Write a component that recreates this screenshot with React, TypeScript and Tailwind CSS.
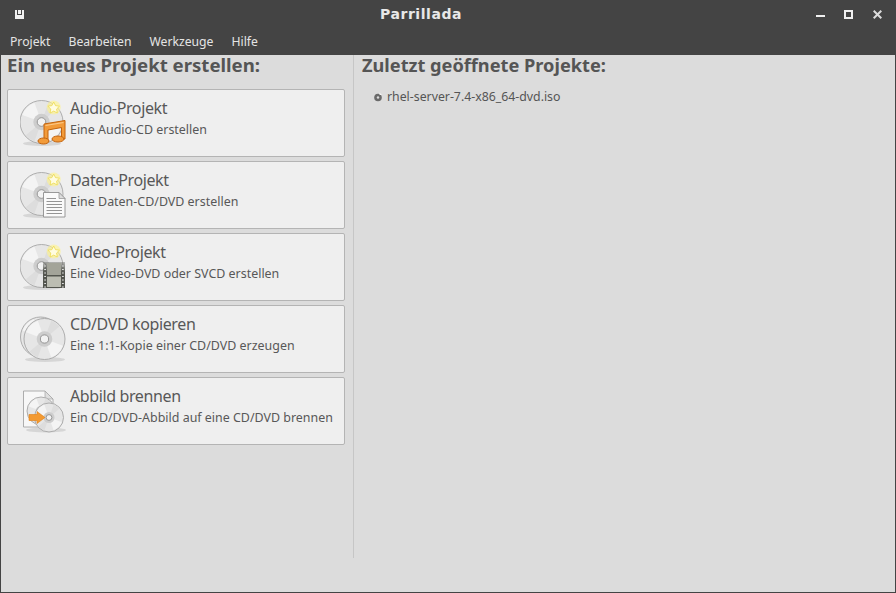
import React from "react";

const font = { fontFamily: '"Noto Sans", sans-serif' };

// Silver disc with soft reflections, drawn in a 48x48 box
function Disc({ cx = 21.5, cy = 23, r = 21.5 }: { cx?: number; cy?: number; r?: number }) {
  const p = (deg: number, rad: number) => {
    const a = (deg * Math.PI) / 180;
    return `${cx + Math.cos(a) * rad} ${cy + Math.sin(a) * rad}`;
  };
  const wedge = (a: number, b: number) =>
    `M${p(a, r * 0.3)} L${p(a, r - 1)} A${r - 1} ${r - 1} 0 0 1 ${p(b, r - 1)} L${p(b, r * 0.3)} Z`;
  return (
    <g>
      <circle cx={cx} cy={cy} r={r} fill="#e6e6e6" stroke="#a6a6a6" strokeWidth="0.9" />
      <path d={wedge(200, 250)} fill="#f4f4f4" />
      <path d={wedge(20, 70)} fill="#f4f4f4" />
      <path d={wedge(290, 320)} fill="#dddddd" />
      <path d={wedge(110, 140)} fill="#dddddd" />
      <circle cx={cx} cy={cy} r={r * 0.38} fill="#cdcdcd" />
      <circle cx={cx} cy={cy} r={r * 0.2} fill="#f2f2f2" stroke="#8e8e8e" strokeWidth="0.9" />
    </g>
  );
}

function Shadow({ cx = 22, cy = 44.5, rx = 19 }: { cx?: number; cy?: number; rx?: number }) {
  return <ellipse cx={cx} cy={cy} rx={rx} ry="2.6" fill="#000" opacity="0.1" />;
}

function Star() {
  return (
    <g>
      <circle cx="33.7" cy="8.5" r="7" fill="#fff38c" opacity="0.6" />
      <path
        d="M33.7 3l1.8 3.6 4 .6-2.9 2.8.7 4-3.6-1.9-3.6 1.9.7-4-2.9-2.8 4-.6z"
        fill="#fffce0"
        stroke="#efdc50"
        strokeWidth="0.8"
      />
    </g>
  );
}

function AudioIcon() {
  return (
    <svg width="48" height="48" viewBox="0 0 48 48">
      <Shadow />
      <Disc />
      <Star />
      <path
        d="M24 25 L45 21.5 V40 H41.5 V28.5 L28 31 V43 H24 Z"
        fill="#f29b3a"
        stroke="#c4630c"
        strokeWidth="1"
      />
      <path d="M25.5 26.5 L43.5 23.5" stroke="#fcc98a" strokeWidth="1.2" />
      <ellipse cx="23.5" cy="42" rx="5.5" ry="3" fill="#f29b3a" stroke="#c4630c" strokeWidth="1" />
      <ellipse cx="38" cy="40" rx="6" ry="3" fill="#f29b3a" stroke="#c4630c" strokeWidth="1" />
    </svg>
  );
}

function DataIcon() {
  return (
    <svg width="48" height="48" viewBox="0 0 48 48">
      <Shadow />
      <Disc />
      <Star />
      <path d="M23.5 21.5 H39 L45 27.5 V46 H23.5 Z" fill="#fafafa" stroke="#8f8f8f" strokeWidth="0.9" />
      <path d="M39 21.5 V27.5 H45 Z" fill="#dcdcdc" stroke="#8f8f8f" strokeWidth="0.7" />
      <path
        d="M26.5 27.5 H36 M26.5 30.5 H42 M26.5 33.5 H42 M26.5 36.5 H42 M26.5 39.5 H42 M26.5 42.5 H42"
        stroke="#7b7b7b"
        strokeWidth="0.8"
      />
    </svg>
  );
}

function VideoIcon() {
  return (
    <svg width="48" height="48" viewBox="0 0 48 48">
      <defs>
        <linearGradient id="film" x1="0" y1="0" x2="0" y2="1">
          <stop offset="0" stopColor="#54564f" stopOpacity="0.35" />
          <stop offset="0.4" stopColor="#54564f" />
        </linearGradient>
      </defs>
      <Shadow />
      <Disc />
      <Star />
      <rect x="23" y="19" width="22" height="26" fill="url(#film)" />
      <rect x="27" y="20" width="14" height="12" fill="#a3a499" />
      <rect x="27" y="33.5" width="14" height="10.5" fill="#bcbdb2" />
      <path
        d="M24.2 23h1.8M24.2 26.5h1.8M24.2 30h1.8M24.2 33.5h1.8M24.2 37h1.8M24.2 40.5h1.8M24.2 44h1.8M42 23h1.8M42 26.5h1.8M42 30h1.8M42 33.5h1.8M42 37h1.8M42 40.5h1.8M42 44h1.8"
        stroke="#dedede"
        strokeWidth="1.2"
      />
    </svg>
  );
}

function CopyIcon() {
  return (
    <svg width="48" height="48" viewBox="0 0 48 48">
      <Shadow cx={25} cy={44.5} rx={20} />
      <Disc cx={20.5} cy={22} r={20} />
      <Disc cx={24.5} cy={24} r={20.5} />
    </svg>
  );
}

function ImageIcon() {
  return (
    <svg width="48" height="48" viewBox="0 0 48 48">
      <Shadow cx={26} cy={43} rx={20} />
      <path d="M3.5 4 H25 L33 12 V40 H3.5 Z" fill="#f7f7f7" stroke="#a5a5a5" strokeWidth="0.9" />
      <path d="M25 4 V12 H33 Z" fill="#dedede" stroke="#a5a5a5" strokeWidth="0.7" />
      <Disc cx={21} cy={24} r={14} />
      <Disc cx={29} cy={30.5} r={14.5} />
      <path d="M9 27.5 H17 V24.5 L25 30.5 L17 36.5 V33.5 H9 Z" fill="#f39a32" stroke="#e17f14" strokeWidth="0.6" />
    </svg>
  );
}

const projects = [
  { title: "Audio-Projekt", sub: "Eine Audio-CD erstellen", icon: <AudioIcon /> },
  { title: "Daten-Projekt", sub: "Eine Daten-CD/DVD erstellen", icon: <DataIcon /> },
  { title: "Video-Projekt", sub: "Eine Video-DVD oder SVCD erstellen", icon: <VideoIcon /> },
  { title: "CD/DVD kopieren", sub: "Eine 1:1-Kopie einer CD/DVD erzeugen", icon: <CopyIcon /> },
  { title: "Abbild brennen", sub: "Ein CD/DVD-Abbild auf eine CD/DVD brennen", icon: <ImageIcon /> },
];

const menus = ["Projekt", "Bearbeiten", "Werkzeuge", "Hilfe"];

export default function App() {
  return (
    <div
      className="flex flex-col w-[896px] h-[593px] overflow-hidden bg-[#dcdcdc] text-[#4b4b4b] border-x border-b border-[#444444]"
      style={font}
    >
      {/* Title bar */}
      <div className="flex items-center h-[32px] pb-[3px] bg-[#444444] shrink-0">
        <div className="w-[37px] flex justify-center">
          <div className="relative w-[9px] h-[9px] bg-[#f0f0f0]">
            <div className="absolute left-[2px] top-0 w-[5px] h-[5px] bg-[#444444]" />
            <div className="absolute left-[3px] top-0 w-[3px] h-[4px] bg-[#f0f0f0]" />
          </div>
        </div>
        <div className="flex-1 text-center text-[14px] font-bold tracking-[0.55px] text-[#e8e8e8] font-['DejaVu_Sans'] mr-[12px]">
          Parrillada
        </div>
        <div className="flex items-center gap-[19px] pr-[13px]">
          <div className="w-[9px] h-[2px] mt-[2px] bg-[#f0f0f0]" />
          <div className="w-[9px] h-[9px] border-2 border-[#f0f0f0]" />
          <svg width="9" height="9" viewBox="0 0 9 9" className="ml-[1px]">
            <path d="M0.7 0.7 L8.3 8.3 M8.3 0.7 L0.7 8.3" stroke="#dcdcdc" strokeWidth="2" />
          </svg>
        </div>
      </div>

      {/* Menu bar */}
      <div className="flex items-center gap-[18px] h-[23px] pl-[9px] pb-[2px] bg-[#444444] text-[12.2px] text-[#e4e4e4] shrink-0">
        {menus.map((m) => (
          <span key={m}>{m}</span>
        ))}
      </div>

      {/* Content */}
      <div className="flex flex-1 min-h-0">
        <div className="w-[353px] h-[503px] pl-[6px] pr-[8px] border-r border-[#c6c6c6] shrink-0">
          <h2 className="h-[34px] text-[18.6px] leading-[20px] font-bold text-[#555555]">
            Ein neues Projekt erstellen:
          </h2>
          <div className="flex flex-col gap-[4px]">
            {projects.map((p) => (
              <div
                key={p.title}
                className="flex items-center h-[68px] pl-[12px] bg-[#efefef] border border-[#b4b4b4] rounded-[2px]"
              >
                <div className="w-[50px] h-[48px] shrink-0">{p.icon}</div>
                <div className="flex flex-col pb-[9px]">
                  <span className="text-[16px] tracking-[-0.38px] leading-[22px] text-[#585858]">{p.title}</span>
                  <span className="text-[12.45px] leading-[21px] text-[#585858]">{p.sub}</span>
                </div>
              </div>
            ))}
          </div>
        </div>
        <div className="flex-1 pl-[8px]">
          <h2 className="h-[31px] text-[18.2px] leading-[20px] font-bold text-[#555555]">
            Zuletzt geöffnete Projekte:
          </h2>
          <div className="flex items-center gap-[4px] pl-[11px] pt-[1px] text-[12.3px] leading-[20px] text-[#555555]">
            <svg width="10" height="10" viewBox="0 0 10 10">
              <circle cx="5" cy="5.5" r="3.8" fill="#6a6a6a" />
              <circle cx="5" cy="5.5" r="1.2" fill="#dcdcdc" />
              <path d="M6.5 0.5 L9 3 L6.5 3 Z" fill="#f4f4f4" />
            </svg>
            <span>rhel-server-7.4-x86_64-dvd.iso</span>
          </div>
        </div>
      </div>
    </div>
  );
}
